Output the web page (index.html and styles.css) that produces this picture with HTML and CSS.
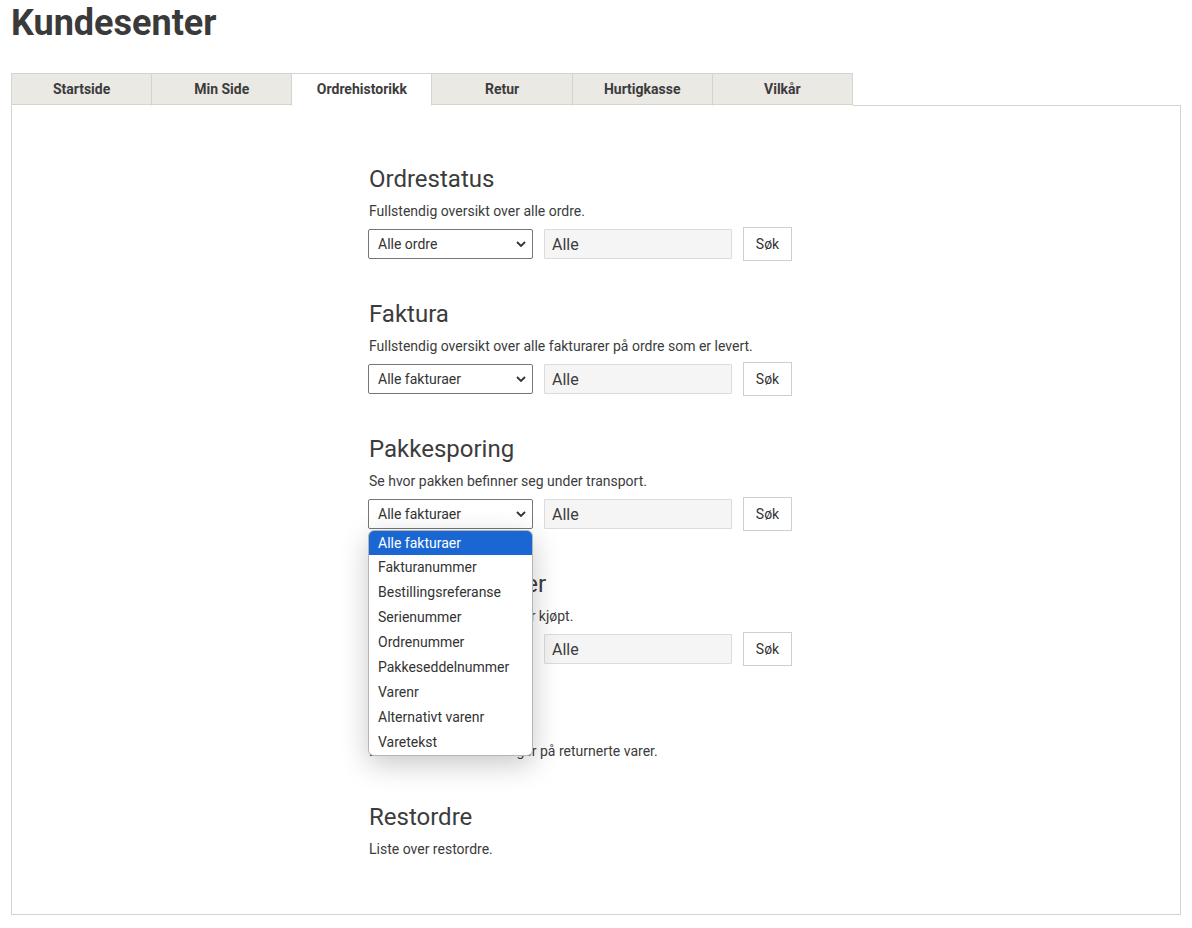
FILE: index.html
```html
<!DOCTYPE html>
<html lang="no">
<head>
<meta charset="utf-8">
<title>Kundesenter</title>
<link rel="stylesheet" href="styles.css">
</head>
<body>
<div class="page">
  <h1 class="title">Kundesenter</h1>
  <nav class="tabs">
    <a class="tab">Startside</a>
    <a class="tab">Min Side</a>
    <a class="tab active">Ordrehistorikk</a>
    <a class="tab">Retur</a>
    <a class="tab">Hurtigkasse</a>
    <a class="tab">Vilkår</a>
  </nav>
  <div class="panel">
    <div class="column">
      <section class="block">
        <h2>Ordrestatus</h2>
        <p>Fullstendig oversikt over alle ordre.</p>
        <div class="controls">
          <div class="select"><span>Alle ordre</span><svg viewBox="0 0 10 6" class="chev"><path d="M1 1l4 4 4-4" fill="none" stroke="#333" stroke-width="1.8"/></svg></div>
          <div class="input">Alle</div>
          <button class="btn">Søk</button>
        </div>
      </section>
      <section class="block">
        <h2>Faktura</h2>
        <p>Fullstendig oversikt over alle fakturarer på ordre som er levert.</p>
        <div class="controls">
          <div class="select"><span>Alle fakturaer</span><svg viewBox="0 0 10 6" class="chev"><path d="M1 1l4 4 4-4" fill="none" stroke="#333" stroke-width="1.8"/></svg></div>
          <div class="input">Alle</div>
          <button class="btn">Søk</button>
        </div>
      </section>
      <section class="block">
        <h2>Pakkesporing</h2>
        <p>Se hvor pakken befinner seg under transport.</p>
        <div class="controls">
          <div class="select-wrap">
            <div class="select"><span>Alle fakturaer</span><svg viewBox="0 0 10 6" class="chev"><path d="M1 1l4 4 4-4" fill="none" stroke="#333" stroke-width="1.8"/></svg></div>
            <ul class="listbox">
              <li class="selected">Alle fakturaer</li>
              <li>Fakturanummer</li>
              <li>Bestillingsreferanse</li>
              <li>Serienummer</li>
              <li>Ordrenummer</li>
              <li>Pakkeseddelnummer</li>
              <li>Varenr</li>
              <li>Alternativt varenr</li>
              <li>Varetekst</li>
            </ul>
          </div>
          <div class="input">Alle</div>
          <button class="btn">Søk</button>
        </div>
      </section>
      <section class="block">
        <h2>Kjøpte produkter</h2>
        <p>Liste over produkter du har kjøpt.</p>
        <div class="controls">
          <div class="select"><span>Alle produkter</span><svg viewBox="0 0 10 6" class="chev"><path d="M1 1l4 4 4-4" fill="none" stroke="#333" stroke-width="1.8"/></svg></div>
          <div class="input">Alle</div>
          <button class="btn">Søk</button>
        </div>
      </section>
      <section class="block plain">
        <h2>Kreditnotaer</h2>
        <p>Liste over alle krediteringer på returnerte varer.</p>
      </section>
      <section class="block last">
        <h2>Restordre</h2>
        <p>Liste over restordre.</p>
      </section>
    </div>
  </div>
</div>
</body>
</html>
```

FILE: styles.css
```css
* { box-sizing: border-box; }
html, body { margin: 0; padding: 0; background: #fff; }
body {
  font-family: Roboto, "Liberation Sans", Arial, sans-serif;
  color: #3c3c3c;
}
.page { padding: 0 11px; }
.title {
  margin: 2px 0 0;
  font-size: 36px;
  line-height: 42px;
  font-weight: 700;
  color: #3a3a3a;
}
.tabs {
  display: flex;
  margin-top: 29px;
  position: relative;
  z-index: 1;
  margin-bottom: -1px;
}
.tab {
  width: 140.17px;
  height: 33px;
  display: flex;
  align-items: center;
  justify-content: center;
  padding-bottom: 1px;
  font-size: 14px;
  font-weight: 700;
  color: #3c3c3c;
  background: #ebe9e4;
  border: 1px solid #d7d4cf;
  border-left: none;
  border-bottom: 1px solid #fff;
  box-shadow: inset 0 -1px 0 #d7d4cf;
}
.tab:first-child { border-left: 1px solid #d7d4cf; width: 141.17px; }
.tab.active {
  background: #fff;
  box-shadow: none;
}
.panel {
  border: 1px solid #d7d4cf;
  padding: 59px 0 55px;
}
.column {
  width: 456px;
  margin: 0 auto;
}
.block { margin-bottom: 39px; }
.block.plain { margin-bottom: 42px; }
.block.last { margin-bottom: 0; }
.block h2 {
  margin: 0;
  padding-left: 1px;
  font-size: 24px;
  line-height: 28px;
  font-weight: 400;
  color: #3c3c3c;
}
.block p {
  margin: 8px 0 0;
  padding-left: 1px;
  font-size: 14px;
  line-height: 20px;
}
.controls {
  display: flex;
  align-items: center;
  gap: 11px;
  margin-top: 6px;
  height: 34px;
}
.select-wrap { position: relative; }
.select {
  width: 165px;
  height: 30px;
  border: 1px solid #767676;
  border-radius: 2px;
  background: #fff;
  display: flex;
  align-items: center;
  justify-content: space-between;
  padding: 0 6px 0 9px;
  font-size: 14px;
  color: #333;
}
.chev { width: 10px; height: 6px; }
.input {
  width: 188px;
  height: 30px;
  border: 1px solid #dcdcdc;
  background: #f5f5f5;
  border-radius: 1px;
  font-size: 16px;
  display: flex;
  align-items: center;
  padding: 0 7px;
  color: #3c3c3c;
}
.btn {
  width: 49px;
  height: 34px;
  border: 1px solid #cfcfcf;
  background: #fff;
  font-family: inherit;
  font-size: 14px;
  color: #333;
  padding: 0;
}
.listbox {
  position: absolute;
  top: 31px;
  left: 0;
  width: 165px;
  margin: 0;
  padding: 0;
  list-style: none;
  background: #fff;
  border: 1px solid #b5b5b5;
  border-radius: 6px;
  box-shadow: 0 8px 28px rgba(0,0,0,0.22);
  z-index: 5;
  overflow: hidden;
}
.listbox li {
  height: 25px;
  line-height: 24px;
  padding-left: 9px;
  font-size: 14px;
  color: #333;
}
.listbox li.selected {
  background: #1a66d2;
  color: #fff;
  height: 24px;
}
```
